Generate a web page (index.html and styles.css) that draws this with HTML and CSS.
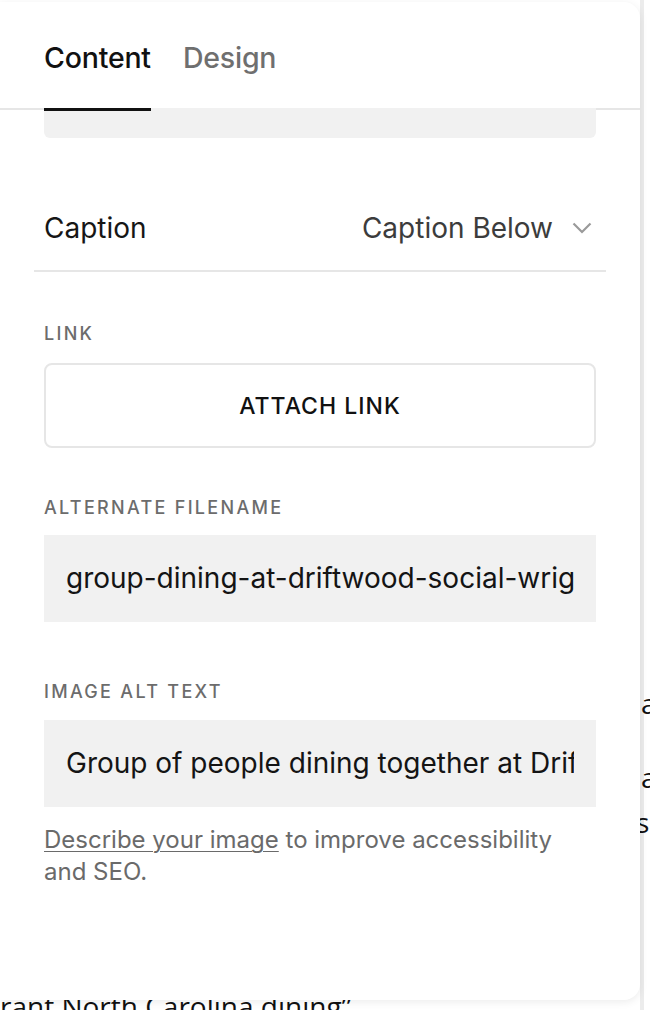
FILE: index.html
```html
<!DOCTYPE html>
<html lang="en">
<head>
    <meta charset="UTF-8">
    <meta name="viewport" content="width=device-width, initial-scale=1.0">
    <title>Image Block Settings</title>
    <link rel="stylesheet" href="styles.css">
</head>
<body>
    <!-- page content behind the editor panel -->
    <div class="backdrop">
        <div class="back-line line-a1">a</div>
        <div class="back-line line-a2">a</div>
        <div class="back-line line-se">se</div>
        <div class="back-bottom">rant North Carolina dining”</div>
    </div>

    <aside class="panel">
        <nav class="tabs">
            <a href="#" class="tab active">Content</a>
            <a href="#" class="tab">Design</a>
        </nav>

        <div class="panel-body">
            <div class="prev-field"></div>

            <div class="select-row">
                <span class="select-label">Caption</span>
                <span class="select-value">
                    Caption Below
                    <svg class="chevron" width="20" height="12" viewBox="0 0 20 12">
                        <path d="M1.5 1.5 L10 10 L18.5 1.5" fill="none" stroke="#9a9a9a" stroke-width="2.2"/>
                    </svg>
                </span>
            </div>

            <div class="field">
                <div class="field-label">Link</div>
                <button class="attach-btn">Attach Link</button>
            </div>

            <div class="field">
                <div class="field-label">Alternate Filename</div>
                <div class="text-input"><div class="input-text">group-dining-at-driftwood-social-wrightsville-beach</div></div>
            </div>

            <div class="field field-alt">
                <div class="field-label">Image Alt Text</div>
                <div class="text-input"><div class="input-text">Group of people dining together at Driftwood Social</div></div>
                <p class="help"><a href="#" class="help-link">Describe your image</a> to improve accessibility and SEO.</p>
            </div>
        </div>
    </aside>
</body>
</html>
```

FILE: styles.css
```css
/* page */
body {
    margin: 0;
    padding: 0;
    background-color: #fff;
    font-family: Inter, "Liberation Sans", sans-serif;
    width: 650px;
    height: 1010px;
    overflow: hidden;
    position: relative;
}

/* content of the site behind the panel */
.backdrop {
    font-family: "Open Sans", sans-serif;
    font-size: 28px;
    color: #111;
    height: 1010px;
    border-left: 4px solid #ececec;
    margin-left: 640px;
    position: relative;
}
.back-line {
    position: absolute;
    left: -3px;
    line-height: 30px;
}
.line-a1 { top: 688px; }
.line-a2 { top: 762px; }
.line-se { top: 807px; left: -8px; }
.back-bottom {
    position: absolute;
    left: -644px;
    top: 991px;
    white-space: nowrap;
    line-height: 30px;
}

/* editor panel */
.panel {
    position: absolute;
    left: 0;
    top: 2px;
    width: 640px;
    height: 998px;
    background-color: #fff;
    border-radius: 0 16px 16px 0;
    box-shadow: 0 2px 8px rgba(0, 0, 0, 0.08);
    overflow: hidden;
}

.tabs {
    display: flex;
    gap: 32px;
    padding: 0 44px;
    height: 106px;
    border-bottom: 2px solid #e6e6e6;
    align-items: flex-start;
}
.tab {
    font-size: 28.5px;
    font-weight: 500;
    color: #6f6f6f;
    text-decoration: none;
    padding-top: 39px;
    height: 67px;
    line-height: 34px;
    border-bottom: 3px solid transparent;
    letter-spacing: -0.2px;
}
.tab.active {
    color: #111;
    border-bottom-color: #111;
}

.panel-body {
    padding: 0 44px;
}

.prev-field {
    height: 30px;
    margin-top: -2px;
    background-color: #f1f1f1;
    border-radius: 0 0 6px 6px;
}

.select-row {
    display: flex;
    justify-content: space-between;
    align-items: center;
    height: 84px;
    margin: 0 -10px;
    padding: 48px 10px 0;
    border-bottom: 2px solid #e6e6e6;
}
.select-label {
    font-size: 28px;
    color: #161616;
}
.select-value {
    display: flex;
    align-items: center;
    gap: 19px;
    font-size: 28px;
    color: #3c3c3c;
    padding-right: 4px;
}

.field {
    display: flex;
    flex-direction: column;
}
.field-label {
    font-size: 18px;
    font-weight: 500;
    letter-spacing: 2.3px;
    text-transform: uppercase;
    color: #6c6c6c;
    padding-top: 50px;
    padding-bottom: 17px;
    line-height: 20px;
}
.select-row + .field .field-label {
    padding-top: 52px;
    padding-bottom: 19px;
}
.field-alt .field-label {
    padding-top: 60px;
    padding-bottom: 18px;
}

.attach-btn {
    height: 85px;
    background-color: #fff;
    border: 2px solid #e6e6e6;
    border-radius: 8px;
    font-family: Inter, "Liberation Sans", sans-serif;
    font-size: 23px;
    font-weight: 500;
    letter-spacing: 1px;
    text-transform: uppercase;
    color: #111;
}

.text-input {
    height: 87px;
    background-color: #f1f1f1;
    padding: 0 22px;
}
.input-text {
    line-height: 87px;
    font-size: 28px;
    color: #141414;
    white-space: nowrap;
    overflow: hidden;
}

.help {
    margin: 17px 0 0;
    font-size: 24px;
    line-height: 32px;
    color: #6a6a6a;
}
.help-link {
    color: #6a6a6a;
    text-decoration: underline;
    text-underline-offset: 3px;
    text-decoration-thickness: 1px;
}
```
